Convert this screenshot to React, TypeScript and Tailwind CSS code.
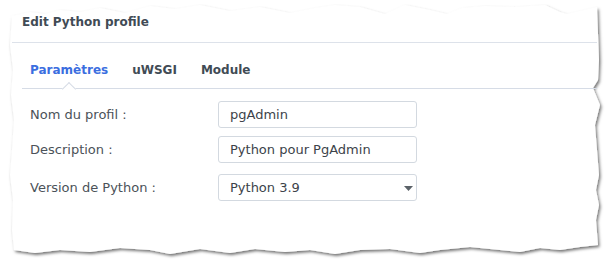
import React from "react";

const font = { fontFamily: '"DejaVu Sans", Verdana, sans-serif' };

const edge = [
  [12, 16], [30, 12], [45, 14], [60, 10], [80, 12], [100, 8], [125, 13], [150, 6], [175, 9], [200, 5],
  [230, 11], [260, 7], [290, 13], [315, 8], [335, 5], [360, 7], [385, 14], [405, 5], [430, 10], [447, 14],
  [462, 8], [485, 6], [515, 7], [545, 5], [560, 12], [567, 14], [597, 7],
  [599, 60], [598, 80], [593, 88], [600, 105], [595, 125], [597, 150], [599, 175], [596, 190], [599, 205],
  [596, 220], [598, 245],
  [580, 247], [560, 250], [540, 248], [520, 252], [500, 250], [470, 247], [440, 250], [420, 253], [390, 249],
  [360, 250], [335, 254], [310, 250], [285, 252], [255, 249], [230, 253], [200, 249], [170, 254], [150, 250],
  [120, 248], [90, 252], [60, 250], [35, 253], [14, 250],
  [12, 230], [13, 200], [10, 175], [12, 150], [14, 120], [11, 95], [13, 70], [10, 45],
]
  .map((p) => p.join(","))
  .join(" ");

function Paper() {
  return (
    <svg className="absolute inset-0" width="611" height="265" viewBox="0 0 611 265">
      <defs>
        <filter id="torn" x="-5%" y="-5%" width="110%" height="115%">
          <feDropShadow dx="1.5" dy="2" stdDeviation="1.6" floodColor="#000" floodOpacity="0.55" />
        </filter>
      </defs>
      <polygon points={edge} fill="#fff" filter="url(#torn)" />
    </svg>
  );
}

function Field({ label, value, select }: { label: string; value: string; select?: boolean }) {
  return (
    <div className="flex items-center">
      <div className="w-[206px] pl-[18px] text-[13px] text-[#4b5259]">{label}</div>
      <div className="relative w-[199px] h-[27px] border border-[#d3d9e0] rounded-[3px] flex items-center pl-[11px] text-[13px] text-[#3c434a]">
        {value}
        {select && (
          <svg className="absolute right-[3px] top-[11px]" width="9" height="5" viewBox="0 0 9 5">
            <path d="M0 0h9L4.5 5z" fill="#5b6268" />
          </svg>
        )}
      </div>
    </div>
  );
}

export default function App() {
  return (
    <div className="relative w-[611px] h-[265px] bg-white overflow-hidden" style={font}>
      <Paper />
      <div className="relative ml-[12px] w-[585px]">
        {/* Header */}
        <div className="h-[43px] pt-[14px] pl-[10px] border-b border-[#dde2ea] text-[12px] leading-[16px] font-bold text-[#414b55]">
          Edit Python profile
        </div>

        {/* Tabs */}
        <div className="ml-[10px] h-[46px] border-b border-[#d6dce6] flex gap-[24px] pl-[8px] pt-[19px] text-[12px] leading-[16px] font-bold">
          <div className="relative text-[#3b6ee0]">
            Paramètres
            <span className="absolute left-1/2 -ml-[5px] top-[22px] w-[10px] h-[10px] rotate-45 bg-white border-l border-t border-[#d6dce6]" />
          </div>
          <div className="text-[#414b55]">uWSGI</div>
          <div className="text-[#414b55]">Module</div>
        </div>

        {/* Form */}
        <div className="pt-[12px] flex flex-col">
          <Field label="Nom du profil :" value="pgAdmin" />
          <div className="h-[8px]" />
          <Field label="Description :" value="Python pour PgAdmin" />
          <div className="h-[11px]" />
          <Field label="Version de Python :" value="Python 3.9" select />
        </div>
      </div>
    </div>
  );
}
